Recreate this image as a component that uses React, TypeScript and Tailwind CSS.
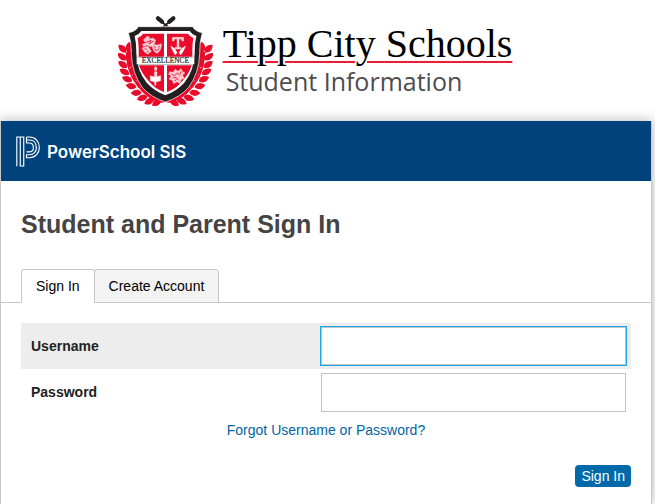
import type { ReactNode } from 'react';

type Leaf = { x: number; y: number; angle: number };

// Leaves of the left half of the wreath; the right half mirrors them.
const leaves: Leaf[] = [
  { x: 50, y: 134, angle: 42 }, { x: 69, y: 130, angle: 95 },
  { x: 49, y: 158, angle: 38 }, { x: 70, y: 153, angle: 100 },
  { x: 51, y: 181, angle: 34 }, { x: 74, y: 176, angle: 105 },
  { x: 56, y: 203, angle: 28 }, { x: 81, y: 198, angle: 102 },
  { x: 64, y: 225, angle: 20 }, { x: 89, y: 217, angle: 98 },
  { x: 76, y: 246, angle: 10 }, { x: 100, y: 236, angle: 88 },
  { x: 91, y: 266, angle: -4 }, { x: 114, y: 253, angle: 76 },
  { x: 109, y: 281, angle: -18 }, { x: 130, y: 267, angle: 62 },
  { x: 130, y: 291, angle: -28 }, { x: 147, y: 279, angle: 48 },
  { x: 152, y: 295, angle: -34 }, { x: 164, y: 286, angle: 20 },
];

function Wreath() {
  return (
    <g fill="#ea0a2a">
      <path d="M62 145Q62 220 120 270Q145 290 174 292" fill="none" stroke="#ea0a2a" strokeWidth="5" />
      {leaves.map((l) => (
        <path key={`${l.x}-${l.y}`} d="M-17 0Q-6 -11 6 -8Q13 -6 16 2Q6 12 -5 9Q-12 7 -17 0Z" transform={`translate(${l.x} ${l.y}) rotate(${l.angle})`} />
      ))}
    </g>
  );
}

function Crest() {
  return (
    <svg viewBox="36 30 285 276" className="h-[92px] w-[95px] shrink-0" role="img" aria-label="Tipp City Schools crest">
      <Wreath />
      <g transform="translate(357 0) scale(-1 1)"><Wreath /></g>
      <g stroke="#231f20" strokeLinecap="round">
        <path d="M161 48L204 84M197 48L153 84" strokeWidth="5" />
        <path d="M156 43L168 53M202 43L190 53" strokeWidth="13" />
      </g>
      <path d="M97 68H260Q267 82 289 86Q280 116 281 149Q279 208 248 250Q222 280 178 294Q135 280 109 250Q78 208 76 149Q77 116 67 86Q90 82 97 68Z" fill="#231f20" stroke="#fff" strokeWidth="2" />
      <path d="M106 81H251Q257 91 271 96Q265 120 266 149Q264 200 235 236Q212 261 178 274Q145 261 122 236Q93 200 91 149Q92 120 86 96Q100 91 106 81Z" fill="#fff" />
      <g fill="#ea0a2a">
        <path d="M111 89H174V158H98Q99 124 95 102Q107 97 111 89Z" />
        <path d="M183 89H246Q250 97 262 102Q258 124 259 158H183Z" />
        <path d="M99 184H174V264Q146 254 128 231Q107 209 99 184Z" />
        <path d="M183 184H257Q250 209 229 231Q211 254 183 264Z" />
      </g>
      <path d="M92 160H265V181H92Z" fill="#fff" />
      <path d="M92 160H265M95 182H262" stroke="#777" strokeWidth="1.5" />
      <text x="178" y="178" textAnchor="middle" fontSize="22" fill="#231f20" stroke="#231f20" strokeWidth=".5" className="font-['Liberation_Serif',serif]">EXCELLENCE</text>
      <g fill="#f8c9cf" stroke="#fff">
        <path d="M199 100H233V111H228L226 105H219V130H225V135H207V130H213V105H206L204 111H199Z" />
        <path d="M194 126Q207 131 213 146L208 153Q202 145 199 137ZM239 126Q226 131 219 146L224 153Q231 145 234 137Z" fill="#fff" />
        <path d="M112 108L123 97L131 99L128 106L140 102L149 108L145 120L134 128L123 123L113 128L109 122L118 116Z" />
        <path d="M138 119Q151 127 166 119Q167 139 153 148Q137 140 138 119ZM108 132L126 127L136 142L125 151Q113 145 108 132Z" />
        <path d="M145 203H153V219H145ZM149 187Q158 195 149 201Q140 195 149 187Z" />
        <path d="M133 215L148 220L164 215V230L150 234V244H146V234L133 230Z" fill="#fff" />
        <path d="M191 203L202 205L207 196L216 202L225 194L230 203L237 207L229 213L235 223L226 226L222 238L213 233L203 239L199 229L189 225L196 216L188 211Z" />
      </g>
      <g fill="none" stroke="#ea0a2a" strokeWidth="2.500">
        <path d="M116 117L135 109L129 120L143 111M143 128L149 130M157 130L162 127M145 136Q153 144 160 134M116 134L122 136M122 145L128 141" />
        <path d="M197 210L205 215L215 207L222 215M200 222L210 220L218 229M225 202L222 210M207 231L212 224" />
      </g>
    </svg>
  );
}

function PowerSchoolMark() {
  return (
    <svg viewBox="47 62 73 92" className="h-[31px] w-6 shrink-0" fill="none" stroke="#fff" strokeWidth="3.5" aria-hidden="true">
      <path d="M49.500 153V64H70.500V152H60V64" />
      <path d="M79 64H88C106 64 118 78 118 95.500C118 113 106 127 88 127H79V118H88C101 118 109 108 109 95.500C109 82 101 73 88 73H79V64" />
      <path d="M79 73V82H87C95 82 100 88 100 95.500C100 103 95 109 87 109H79" />
    </svg>
  );
}

function Field({ id, label, type = 'text', shaded = false }: { id: string; label: string; type?: string; shaded?: boolean }) {
  return (
    <div className={`flex h-[46px] items-center justify-between pr-[5px] pl-[10px] ${shaded ? 'bg-[#ededed]' : ''}`}>
      <label htmlFor={id} className="font-bold text-[#222]">{label}</label>
      <input id={id} type={type} className={`w-[305px] border border-[#c4c4c4] bg-white px-2 outline-none ${shaded ? 'h-[38px] ring-1 ring-[#16a8ea]' : 'h-[39px]'}`} />
    </div>
  );
}

function Tab({ active = false, children }: { active?: boolean; children: ReactNode }) {
  return (
    <button type="button" role="tab" aria-selected={active} className={`h-[34px] rounded-t-[3px] border border-[#c8c8c8] px-[14px] text-black ${active ? 'border-b-white bg-white' : '-ml-px bg-[#f3f3f3]'}`}>
      {children}
    </button>
  );
}

export default function App() {
  return (
    <div className="flex min-h-screen flex-col bg-white font-['Liberation_Sans',Arial,sans-serif] text-sm">
      <header className="flex h-[121px] justify-center gap-[10px] pt-[14px] pr-[25px]">
        <Crest />
        <div className="pt-2">
          <p className="font-['Liberation_Serif',serif] text-[40px] leading-[44px] text-black underline decoration-[#ed1c34] decoration-2 underline-offset-[4px]">Tipp City Schools</p>
          <p className="pl-[3px] font-['Open_Sans',sans-serif] text-[25px] leading-[30px] text-[#4d4d4f]">Student Information</p>
        </div>
      </header>
      <main className="mr-[3px] flex-1 border-x border-[#c8c8c8] bg-white shadow-[0_0_12px_rgba(0,0,0,0.3)]">
        <div className="flex h-[60px] items-center gap-[7px] bg-[#00427c] px-[15px] text-white">
          <PowerSchoolMark />
          <span className="pt-[2px] font-['Inter',sans-serif] text-[17px] font-semibold">PowerSchool SIS</span>
        </div>
        <h1 className="px-5 pt-7 text-[25px] leading-[30px] font-bold text-[#444]">Student and Parent Sign In</h1>
        <div role="tablist" className="mt-[30px] flex border-b border-[#c8c8c8] px-5">
          <div className="-mb-px flex">
            <Tab active>Sign In</Tab>
            <Tab>Create Account</Tab>
          </div>
        </div>
        <form className="px-5 pt-5" onSubmit={(e) => e.preventDefault()}>
          <Field id="username" label="Username" shaded />
          <Field id="password" label="Password" type="password" />
          <p className="pt-[5px] text-center leading-5"><a href="#recover" className="text-[#0065a6]">Forgot Username or Password?</a></p>
          <div className="flex justify-end pt-[25px]">
            <button type="submit" className="h-[22px] rounded bg-[#0069aa] px-[6px] text-white">Sign In</button>
          </div>
        </form>
      </main>
    </div>
  );
}
